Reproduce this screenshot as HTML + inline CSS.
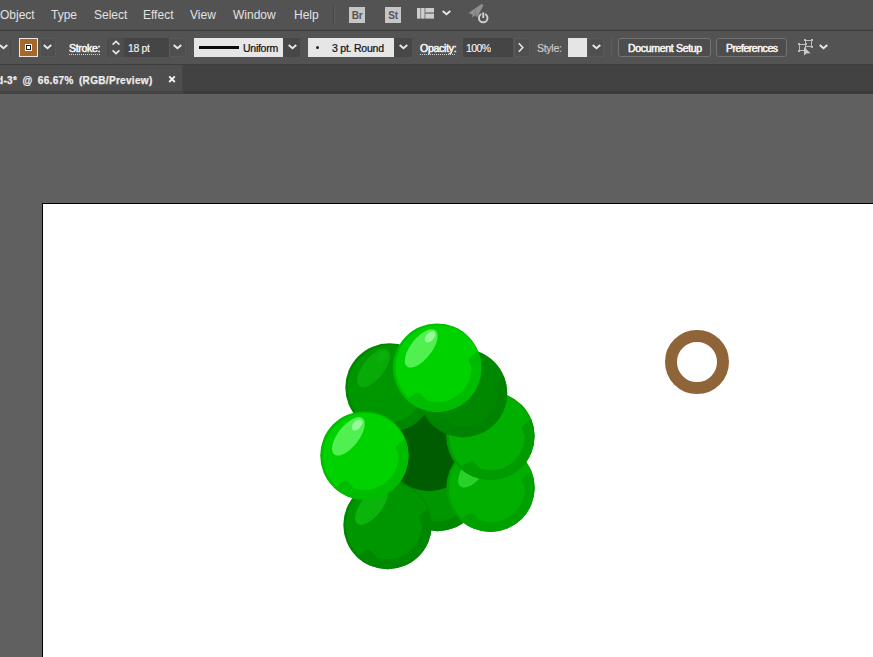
<!DOCTYPE html>
<html>
<head>
<meta charset="utf-8">
<title>Illustrator</title>
<style>
html,body{margin:0;padding:0;}
body{width:873px;height:657px;overflow:hidden;background:#606060;font-family:"Liberation Sans",sans-serif;position:relative;}
.abs{position:absolute;}
#menubar{left:0;top:0;width:873px;height:29px;background:#535353;}
#menuline{left:0;top:29px;width:873px;height:2px;background:linear-gradient(#4b4b4b 0 50%,#3d3d3d 50% 100%);}
#ctrlbar{left:0;top:31px;width:873px;height:33px;background:#535353;}
#ctrlline{left:0;top:64px;width:873px;height:1px;background:#3e3e3e;}
#tabbar{left:0;top:65px;width:873px;height:26px;background:#424242;}
#tab{left:0;top:65px;width:183px;height:29px;background:linear-gradient(#4e4e4e 0 26px,#454545 26px);border-right:1px solid #464646;box-sizing:border-box;}
#tabline{left:183px;top:91px;width:690px;height:3px;background:#3c3c3c;}
#canvas{left:0;top:94px;width:873px;height:563px;background:#606060;}
#artboard{left:42px;top:203px;width:840px;height:460px;background:#fff;border:1px solid #000;box-sizing:border-box;}
.m{position:absolute;top:8px;font-size:12px;color:#e2e2e2;white-space:nowrap;line-height:15px;}
.t{position:absolute;white-space:nowrap;font-size:10.5px;line-height:13px;color:#efefef;}

.ul{position:absolute;height:1px;background:repeating-linear-gradient(90deg,#d4d4d4 0 1px,transparent 1px 2px);}
.t{text-shadow:0 0 0.6px #fff;transform:scaleY(0.96);transform-origin:50% 60%;-webkit-text-stroke:0.15px currentColor;}
.dd{background:#4f4f4f;border:1px solid #595959;box-sizing:border-box;}
.dd2{background:#474747;}
.btn{box-sizing:border-box;border:1px solid #727272;border-radius:3px;background:#4d4d4d;}
.b{-webkit-text-stroke:0.4px #f0f0f0;}
</style>
</head>
<body>
<div id="menubar" class="abs"></div>
<div id="menuline" class="abs"></div>
<div id="ctrlbar" class="abs"></div>
<div id="ctrlline" class="abs"></div>
<div id="tabbar" class="abs"></div>
<div id="tab" class="abs"></div>
<div id="tabline" class="abs"></div>
<div id="canvas" class="abs"></div>
<div id="artboard" class="abs"></div>

<svg class="abs" style="left:0;top:0;" width="873" height="657" viewBox="0 0 873 657">
<defs>
<clipPath id="gc"><circle r="44.2"/></clipPath>
<clipPath id="ab"><rect x="43" y="204" width="830" height="453"/></clipPath>

<symbol id="g" overflow="visible">
  <circle r="44.2" fill="var(--rim)"/>
  <g clip-path="url(#gc)">
    <circle cx="1" cy="0" r="42.6" fill="var(--body)"/>
    <path d="M42.34 -17.97 L32.92 -10.58 Q30.40 -8.60 31.89 -5.77 L34.28 -1.20 A34.3 34.3 0 0 1 -10.60 32.62 L-16.42 26.35 Q-18.60 24.00 -21.33 25.67 L-32.53 32.53 A46 46 0 0 0 42.34 -17.97 Z" fill="var(--rim)"/>
  </g>
  <ellipse cx="-16" cy="-19.3" rx="23" ry="10.5" transform="rotate(-52 -16 -19.3)" fill="var(--hl)"/>
  <ellipse cx="-7.2" cy="-30.8" rx="6.6" ry="4" transform="rotate(-48 -7.2 -30.8)" fill="var(--hl2)"/>
</symbol>

</defs>
<g clip-path="url(#ab)">
  <!-- ring -->
  <circle cx="697" cy="362" r="26" fill="none" stroke="#8f6438" stroke-width="12"/>
  <!-- grapes back to front -->
  <use href="#g" x="437.5" y="487" style="--body:#009600;--rim:#008700;--hl:#06aa06;--hl2:#06aa06"/>
  <circle cx="429" cy="447" r="44.2" fill="#005c00"/>
  <use href="#g" x="389.5" y="387.5" style="--body:#009600;--rim:#008700;--hl:#08aa08;--hl2:#0cae0c"/>
  <use href="#g" x="490.5" y="487.7" style="--body:#00af00;--rim:#00a000;--hl:#28d228;--hl2:#28d228"/>
  <use href="#g" x="490.4" y="436" style="--body:#00af00;--rim:#009b00;--hl:#00af00;--hl2:#00af00"/>
  <use href="#g" x="463" y="393" style="--body:#008900;--rim:#008300;--hl:#008900;--hl2:#008900"/>
  <use href="#g" x="387.5" y="525" style="--body:#009600;--rim:#008700;--hl:#0ab40a;--hl2:#0ab40a"/>
  <use href="#g" x="364.4" y="455.6" style="--body:#00d200;--rim:#00bc00;--hl:#50f050;--hl2:#96fa96"/>
  <use href="#g" x="437.2" y="367.7" style="--body:#00d200;--rim:#00bc00;--hl:#50f050;--hl2:#96fa96"/>
</g>
</svg>

<!-- menu text -->
<span class="m" id="m1" style="left:0px;">Object</span>
<span class="m" id="m2" style="left:51px;">Type</span>
<span class="m" id="m3" style="left:94px;">Select</span>
<span class="m" id="m4" style="left:143px;">Effect</span>
<span class="m" id="m5" style="left:190px;">View</span>
<span class="m" id="m6" style="left:233px;">Window</span>
<span class="m" id="m7" style="left:294px;">Help</span>

<!-- menubar icons -->
<div class="abs" style="left:333px;top:5px;width:1px;height:20px;background:#484848;"></div>
<div class="abs" style="left:334px;top:5px;width:1px;height:20px;background:#5d5d5d;"></div>
<div class="abs" style="left:349px;top:7px;width:16px;height:16px;background:#c6c6c6;"></div>
<span class="abs" style="left:349px;top:7px;width:16px;height:16px;line-height:17px;text-align:center;font-size:10px;font-weight:bold;color:#555;letter-spacing:-0.2px;">Br</span>
<div class="abs" style="left:385px;top:7px;width:16px;height:16px;background:#c6c6c6;"></div>
<span class="abs" style="left:385px;top:7px;width:16px;height:16px;line-height:17px;text-align:center;font-size:10px;font-weight:bold;color:#555;letter-spacing:-0.2px;">St</span>
<svg class="abs" style="left:417px;top:8px;" width="18" height="12" viewBox="0 0 18 12">
  <rect x="0" y="0" width="3.5" height="10.6" fill="#cdcdcd"/>
  <rect x="4.1" y="0" width="3.5" height="10.6" fill="#cdcdcd"/>
  <rect x="8.3" y="0" width="8.7" height="4.5" fill="#cdcdcd"/>
  <rect x="8.3" y="5.6" width="8.7" height="5" fill="#cdcdcd"/>
</svg>
<svg class="abs" style="left:441px;top:9px;" width="11" height="8" viewBox="0 0 11 8"><path d="M1.7 2.1 L5.5 5.2 L9.3 2.1" fill="none" stroke="#e8e8e8" stroke-width="1.9"/></svg>
<svg class="abs" style="left:466px;top:2px;" width="24" height="24" viewBox="0 0 24 24">
  <path d="M2.5 11 L9 6.5 L15.5 2 L17.5 3 L15 8 L11 15 L8.5 13.5 L6 15.5 L6.5 12.5 Z" fill="#909090"/>
  <path d="M9 6.5 L11 15 L8.5 13.5 Z" fill="#7a7a7a"/>
  <circle cx="17.2" cy="16" r="4.3" fill="none" stroke="#d2d2d2" stroke-width="1.9"/>
  <rect x="15.4" y="9.6" width="3.6" height="6.4" fill="#535353"/>
  <rect x="16.3" y="10.4" width="1.9" height="5.6" fill="#d2d2d2"/>
</svg>

<!-- control bar -->
<!-- left fill dropdown chevron -->
<svg class="abs" style="left:-2px;top:43px;" width="11" height="8" viewBox="0 0 11 8"><path d="M1.7 2.1 L5.5 5.2 L9.3 2.1" fill="none" stroke="#e8e8e8" stroke-width="1.9"/></svg>
<div class="abs" style="left:10px;top:38px;width:1px;height:19px;background:#4a4a4a;"></div>
<!-- stroke swatch -->
<div class="abs" style="left:19px;top:38px;width:19px;height:19px;box-sizing:border-box;border:1px solid #f1e6d8;background:#a5682b;"></div>
<div class="abs" style="left:25px;top:44px;width:7px;height:7px;box-sizing:border-box;border:1px solid #fff;background:#1a1a1a;"></div>
<div class="abs" style="left:27px;top:46px;width:3px;height:3px;background:#fff;"></div>
<div class="abs dd" style="left:40px;top:38px;width:16px;height:19px;"></div>
<svg class="abs" style="left:42px;top:43px;" width="11" height="8" viewBox="0 0 11 8"><path d="M1.7 2.1 L5.5 5.2 L9.3 2.1" fill="none" stroke="#e8e8e8" stroke-width="1.9"/></svg>

<span class="t b" id="c1" style="letter-spacing:-0.29px;left:69px;top:42px;">Stroke:</span>
<!-- spinner -->
<div class="abs" style="left:107px;top:38px;width:17px;height:19px;background:#4d4d4d;"></div>
<svg class="abs" style="left:111px;top:39px;" width="10" height="17" viewBox="0 0 10 17">
  <path d="M1.6 5.6 L5 2.4 L8.4 5.6" fill="none" stroke="#e6e6e6" stroke-width="1.7"/>
  <path d="M1.6 11.4 L5 14.6 L8.4 11.4" fill="none" stroke="#e6e6e6" stroke-width="1.7"/>
</svg>
<div class="abs" style="left:124px;top:38px;width:45px;height:19px;background:#454545;"></div>
<span class="t" id="c2" style="letter-spacing:-0.38px;left:128px;top:42px;text-shadow:none;font-weight:normal;color:#f2f2f2;">18 pt</span>
<div class="abs dd" style="left:169px;top:38px;width:17px;height:19px;"></div>
<svg class="abs" style="left:172px;top:43px;" width="11" height="8" viewBox="0 0 11 8"><path d="M1.7 2.1 L5.5 5.2 L9.3 2.1" fill="none" stroke="#e8e8e8" stroke-width="1.9"/></svg>

<!-- profile -->
<div class="abs" style="left:194px;top:38px;width:89px;height:19px;background:#e6e6e6;"></div>
<div class="abs" style="left:199px;top:46px;width:40px;height:3px;background:#0a0a0a;"></div>
<span class="t" id="c3" style="letter-spacing:-0.27px;left:243px;top:42px;color:#141414;text-shadow:none;-webkit-text-stroke:0.25px #141414;">Uniform</span>
<div class="abs dd2" style="left:283px;top:38px;width:17px;height:19px;"></div>
<svg class="abs" style="left:287px;top:43px;" width="11" height="8" viewBox="0 0 11 8"><path d="M1.7 2.1 L5.5 5.2 L9.3 2.1" fill="none" stroke="#e8e8e8" stroke-width="1.9"/></svg>

<!-- brush -->
<div class="abs" style="left:308px;top:38px;width:86px;height:19px;background:#e6e6e6;"></div>
<div class="abs" style="left:316px;top:46px;width:3px;height:3px;border-radius:2px;background:#222;"></div>
<span class="t" id="c4" style="letter-spacing:-0.23px;left:332px;top:42px;color:#141414;text-shadow:none;-webkit-text-stroke:0.25px #141414;">3 pt. Round</span>
<div class="abs dd2" style="left:394px;top:38px;width:18px;height:19px;"></div>
<svg class="abs" style="left:398px;top:43px;" width="11" height="8" viewBox="0 0 11 8"><path d="M1.7 2.1 L5.5 5.2 L9.3 2.1" fill="none" stroke="#e8e8e8" stroke-width="1.9"/></svg>

<span class="t b" id="c5" style="letter-spacing:-0.26px;left:420px;top:42px;">Opacity:</span>
<div class="abs" style="left:463px;top:38px;width:50px;height:19px;background:#454545;"></div>
<span class="t" id="c6" style="letter-spacing:-0.58px;left:466px;top:42px;text-shadow:none;color:#f2f2f2;">100%</span>
<div class="abs dd" style="left:514px;top:38px;width:16px;height:19px;"></div>
<svg class="abs" style="left:517px;top:42px;" width="8" height="11" viewBox="0 0 8 11"><path d="M1.8 1.2 L5.8 5.5 L1.8 9.8" fill="none" stroke="#e4e4e4" stroke-width="1.6"/></svg>

<span class="t" id="c7" style="letter-spacing:-0.28px;left:537px;top:42px;color:#cdcdcd;text-shadow:none;">Style:</span>
<div class="abs" style="left:568px;top:38px;width:19px;height:19px;background:#e5e5e5;"></div>
<div class="abs dd" style="left:587px;top:38px;width:17px;height:19px;"></div>
<svg class="abs" style="left:591px;top:43px;" width="11" height="8" viewBox="0 0 11 8"><path d="M1.7 2.1 L5.5 5.2 L9.3 2.1" fill="none" stroke="#e8e8e8" stroke-width="1.9"/></svg>
<div class="abs" style="left:611px;top:38px;width:1px;height:19px;background:#5e5e5e;"></div>

<div class="abs btn" style="left:618px;top:38px;width:93px;height:19px;"></div>
<span class="t b" id="c8" style="letter-spacing:-0.31px;left:628px;top:42px;">Document Setup</span>
<div class="abs btn" style="left:716px;top:38px;width:71px;height:19px;"></div>
<span class="t b" id="c9" style="letter-spacing:-0.46px;left:726px;top:42px;">Preferences</span>

<svg class="abs" style="left:797px;top:38px;" width="18" height="19" viewBox="0 0 18 19">
  <rect x="2.5" y="6.5" width="6" height="6" fill="none" stroke="#bdbdbd" stroke-width="1"/>
  <rect x="8.5" y="2.5" width="6" height="6" fill="none" stroke="#bdbdbd" stroke-width="1"/>
  <path d="M7 9 L7 17.5 L9.4 15.4 L13.5 15.2 Z" fill="#c9c9c9"/>
  <g fill="#bdbdbd">
  <rect x="1" y="5" width="2" height="2"/><rect x="8" y="5" width="2" height="2"/><rect x="1" y="12" width="2" height="2"/>
  <rect x="7" y="1" width="2" height="2"/><rect x="14" y="1" width="2" height="2"/><rect x="14" y="8" width="2" height="2"/>
  </g>
</svg>
<svg class="abs" style="left:818px;top:43px;" width="11" height="8" viewBox="0 0 11 8"><path d="M1.7 2.1 L5.5 5.2 L9.3 2.1" fill="none" stroke="#e8e8e8" stroke-width="1.9"/></svg>

<div class="ul" style="left:69px;top:54px;width:31px;"></div>
<div class="ul" style="left:420px;top:54px;width:36px;"></div>
<!-- tab -->
<span class="abs" id="tabtxt" style="left:-3px;top:74px;font-size:10px;font-weight:bold;color:#ececec;white-space:nowrap;line-height:13px;letter-spacing:0.32px;word-spacing:2.2px;-webkit-text-stroke:0.25px #ececec;">d-3* @ 66.67% (RGB/Preview)</span>
<svg class="abs" style="left:168px;top:75px;" width="9" height="9" viewBox="0 0 9 9"><path d="M1.2 1.4 L6.8 7 M6.8 1.4 L1.2 7" stroke="#f4f4f4" stroke-width="1.8" fill="none"/></svg>

</body>
</html>
